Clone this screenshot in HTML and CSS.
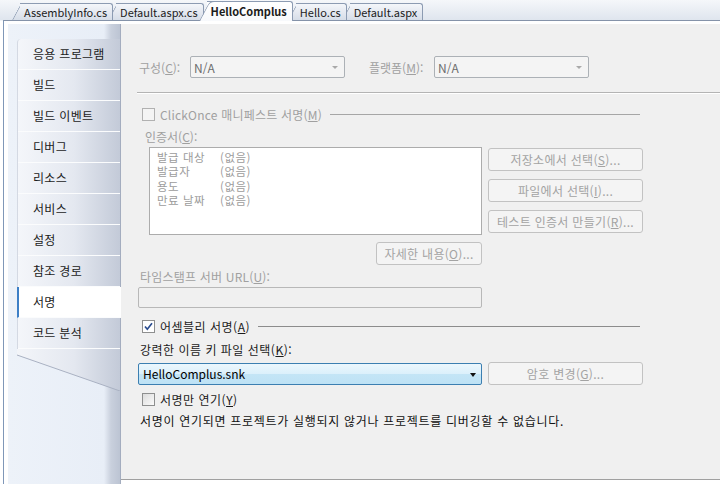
FILE: index.html
```html
<!DOCTYPE html>
<html lang="ko">
<head>
    <meta charset="UTF-8">
    <title>HelloComplus - 서명</title>
    <link rel="stylesheet" href="styles.css">
</head>
<body>
    <div class="tabs">
        <div class="tab">AssemblyInfo.cs</div>
        <div class="tab">Default.aspx.cs</div>
        <div class="tab active">HelloComplus</div>
        <div class="tab">Hello.cs</div>
        <div class="tab">Default.aspx</div>
    </div>

    <div class="doc">
        <div class="nav">
            <div class="nav-list">
                <div class="nav-item">응용 프로그램</div>
                <div class="nav-item">빌드</div>
                <div class="nav-item">빌드 이벤트</div>
                <div class="nav-item">디버그</div>
                <div class="nav-item">리소스</div>
                <div class="nav-item">서비스</div>
                <div class="nav-item">설정</div>
                <div class="nav-item">참조 경로</div>
                <div class="nav-item selected">서명</div>
                <div class="nav-item">코드 분석</div>
            </div>
            <svg class="nav-tail" width="103" height="42" viewBox="0 0 103 42">
                <defs>
                    <linearGradient id="tailFill" x1="0" y1="0" x2="1" y2="0">
                        <stop offset="0" stop-color="#f3f5f9"/>
                        <stop offset="0.55" stop-color="#e4e8f0"/>
                        <stop offset="1" stop-color="#c3cad8"/>
                    </linearGradient>
                </defs>
                <polygon points="0,0 103,0 103,42 0,6" fill="url(#tailFill)"/>
                <line x1="0" y1="6" x2="103" y2="42" stroke="#a9b1c2" stroke-width="1"/>
            </svg>
        </div>

        <div class="content">
            <div class="row config-row">
                <span class="label disabled w-config">구성(<u>C</u>):</span>
                <div class="select disabled"><span>N/A</span><i class="arrow gray"></i></div>
                <span class="label disabled w-platform">플랫폼(<u>M</u>):</span>
                <div class="select disabled"><span>N/A</span><i class="arrow gray"></i></div>
            </div>

            <div class="separator"></div>

            <div class="check-row clickonce">
                <span class="checkbox disabled"></span>
                <span class="label disabled">ClickOnce 매니페스트 서명(<u>M</u>)</span>
                <span class="rule"></span>
            </div>

            <div class="label disabled cert-label">인증서(<u>C</u>):</div>

            <div class="cert">
                <div class="cert-left">
                    <div class="listbox">
                        <div class="cert-line"><span class="key">발급 대상</span><span>(없음)</span></div>
                        <div class="cert-line"><span class="key">발급자</span><span>(없음)</span></div>
                        <div class="cert-line"><span class="key">용도</span><span>(없음)</span></div>
                        <div class="cert-line"><span class="key">만료 날짜</span><span>(없음)</span></div>
                    </div>
                    <div class="button disabled details">자세한 내용(<u>O</u>)...</div>
                </div>
                <div class="cert-buttons">
                    <div class="button disabled">저장소에서 선택(<u>S</u>)...</div>
                    <div class="button disabled">파일에서 선택(<u>I</u>)...</div>
                    <div class="button disabled">테스트 인증서 만들기(<u>R</u>)...</div>
                </div>
            </div>

            <div class="label disabled ts-label">타임스탬프 서버 URL(<u>U</u>):</div>
            <div class="textbox disabled"></div>

            <div class="check-row assembly">
                <span class="checkbox checked">
                    <svg width="11" height="11" viewBox="0 0 11 11"><path d="M2 5.5 L4.3 8.2 L9 2.3" fill="none" stroke="#2a4c8f" stroke-width="1.7"/></svg>
                </span>
                <span class="label">어셈블리 서명(<u>A</u>)</span>
                <span class="rule"></span>
            </div>

            <div class="label key-label">강력한 이름 키 파일 선택(<u>K</u>):</div>
            <div class="key-row">
                <div class="select combo"><span>HelloComplus.snk</span><i class="arrow"></i></div>
                <div class="button disabled password">암호 변경(<u>G</u>)...</div>
            </div>

            <div class="check-row delay">
                <span class="checkbox"></span>
                <span class="label">서명만 연기(<u>Y</u>)</span>
            </div>

            <div class="label note">서명이 연기되면 프로젝트가 실행되지 않거나 프로젝트를 디버깅할 수 없습니다.</div>
        </div>
    </div>
</body>
</html>
```

FILE: styles.css
```css
body {
    margin: 0;
    width: 720px;
    height: 484px;
    overflow: hidden;
    font-family: "Noto Sans CJK KR", "Noto Sans", sans-serif;
    font-size: 12px;
    color: #1b1b1b;
    background: linear-gradient(#f5f7fa, #dfe5ee 20px, #ffffff 21px);
}

u {
    text-decoration: underline;
    text-underline-offset: 1px;
}

/* 문서 탭 */
.tabs {
    position: relative;
    z-index: 0;
    display: flex;
    align-items: flex-end;
    height: 20px;
    padding-left: 20px;
}

.tab {
    position: relative;
    height: 16px;
    line-height: 16px;
    padding: 0 5px 0 4px;
    margin-right: 3px;
    border: 1px solid #8c9bb2;
    border-left: none;
    border-bottom: none;
    border-radius: 0 3px 0 0;
    background: linear-gradient(#f4f6fa, #d6dde8);
    font-size: 11px;
    white-space: nowrap;
}

    .tab::before {
        content: "";
        position: absolute;
        top: -1px;
        bottom: 0;
        left: -8px;
        width: 13px;
        border-left: 1px solid #8c9bb2;
        border-top: 1px solid #8c9bb2;
        border-radius: 5px 0 0 0;
        background: linear-gradient(#f4f6fa, #d6dde8);
        transform: skewX(-28deg);
        transform-origin: bottom left;
        z-index: -1;
    }

    .tab.active {
        z-index: 1;
        height: 19px;
        line-height: 19px;
        margin-bottom: -1px;
        font-weight: bold;
        background: linear-gradient(#ffffff, #f7f9fc);
    }

        .tab.active::before {
            background: linear-gradient(#ffffff, #f7f9fc);
        }

/* 속성 페이지 */
.doc {
    display: flex;
    height: 460px;
    margin-left: 3px;
    padding: 3px 0 0 4px;
    border-top: 1px solid #8593a9;
    border-left: 1px solid #7f97b8;
    background: #ffffff;
}

.nav {
    width: 103px;
    padding: 15px 0 0 9px;
    border-right: 1px solid #a4adbf;
    background: linear-gradient(to right, #edf2f9 0, #e8eef7 96px, #c9d0dd 103px, #bcc4d3 112px);
}

.nav-list {
    border-left: 1px solid #d4d9e3;
    border-radius: 4px 0 0 0;
    background: linear-gradient(to right, #f4f6fa, #e4e8f0 55%, #c3cad8);
}

.nav-item {
    height: 30px;
    line-height: 30px;
    padding-left: 15px;
    border-bottom: 1px solid #fbfcfd;
    letter-spacing: 0.3px;
}

    .nav-item.selected {
        position: relative;
        margin-right: -1px;
        margin-left: -1px;
        background: #ffffff;
        border-left: 2px solid #3d7fc6;
        padding-left: 14px;
    }

.nav-tail {
    display: block;
}

.content {
    flex: 1;
    height: 456px;
    padding: 32px 0 0 17px;
    box-sizing: border-box;
    background: #f0f0f0;
    border-bottom: 1px solid #a0a0a0;
    letter-spacing: 0.5px;
}

.label {
    line-height: 15px;
    white-space: nowrap;
}

    .label.disabled {
        color: #a0a0a0;
    }

.row {
    display: flex;
    align-items: center;
}

.w-config {
    width: 52px;
    padding-left: 1px;
    box-sizing: border-box;
    letter-spacing: 0;
}

.w-platform {
    width: 65px;
    margin-left: 24px;
    letter-spacing: 0;
}

.select {
    position: relative;
    display: flex;
    align-items: center;
    width: 155px;
    height: 22px;
    box-sizing: border-box;
    padding-left: 3px;
    border: 1px solid #acb1b6;
    border-radius: 2px;
    background: #f4f4f4;
    color: #6d6d6d;
    letter-spacing: 0;
}

.arrow {
    position: absolute;
    right: 6px;
    top: 9px;
    width: 0;
    height: 0;
    border-left: 3.5px solid transparent;
    border-right: 3.5px solid transparent;
    border-top: 4px solid #111;
}

    .arrow.gray {
        border-top-color: #a9a9a9;
        border-left-width: 3px;
        border-right-width: 3px;
        border-top-width: 3px;
    }

.separator {
    margin: 14px 0 0 -1px;
    border-top: 1px solid #b4b4b4;
    border-bottom: 1px solid #ffffff;
}

.check-row {
    display: flex;
    align-items: center;
    height: 16px;
    margin-right: 80px;
    padding-left: 4px;
}

.checkbox {
    display: flex;
    align-items: center;
    justify-content: center;
    width: 13px;
    height: 13px;
    box-sizing: border-box;
    margin-right: 5px;
    border: 1px solid #8e8f8f;
    background: linear-gradient(135deg, #dcdcdc, #fbfbfb);
}

    .checkbox.disabled {
        border-color: #b1b1b1;
        background: #f4f4f4;
    }

    .checkbox.checked {
        background: #ffffff;
    }

.rule {
    flex: 1;
    height: 1px;
    margin-left: 8px;
    background: #8c8c8c;
}

.clickonce {
    margin-top: 12px;
}

    .clickonce .label {
        letter-spacing: 0.2px;
    }

    .clickonce .rule {
        background: #a6a6a6;
    }

.cert-label {
    margin: 7px 0 0 7px;
    letter-spacing: 0;
}

.cert {
    display: flex;
    gap: 6px;
    margin-top: 3px;
    padding-left: 11px;
}

.cert-left {
    display: flex;
    flex-direction: column;
    width: 333px;
}

.listbox {
    height: 88px;
    box-sizing: border-box;
    padding: 2px 0 0 7px;
    border: 1px solid #acacac;
    background: #ffffff;
    color: #9c9c9c;
    font-size: 11.5px;
}

.cert-line {
    display: flex;
    height: 14.3px;
    line-height: 14px;
}

    .cert-line .key {
        width: 63px;
    }

.cert-buttons {
    display: flex;
    flex-direction: column;
    gap: 8px;
    padding-top: 1px;
}

.button {
    display: flex;
    align-items: center;
    justify-content: center;
    width: 155px;
    height: 23px;
    box-sizing: border-box;
    border: 1px solid #c2c2c2;
    border-radius: 3px;
    background: #f4f4f4;
    white-space: nowrap;
    letter-spacing: 0.3px;
}

    .button.disabled {
        color: #a3a3a3;
    }

    .button.details {
        align-self: flex-end;
        width: 106px;
        margin-top: 7px;
    }

.ts-label {
    margin: 4px 0 0 2px;
    letter-spacing: 0.2px;
}

.textbox {
    width: 344px;
    height: 21px;
    box-sizing: border-box;
    margin-top: 3px;
    border: 1px solid #b8b8b8;
    border-radius: 2px;
    background: #f0f0f0;
}

.assembly {
    margin-top: 10px;
}

.key-label {
    margin: 8px 0 0 2px;
}

.key-row {
    display: flex;
    align-items: center;
    gap: 6px;
    margin-top: 5px;
}

.select.combo {
    width: 344px;
    height: 22px;
    padding-left: 4px;
    border-color: #3c7fb1;
    background: linear-gradient(#ecf7fd, #dbf0fb 50%, #c4e5f6 51%, #bee2f5);
    color: #000000;
}

    .select.combo .arrow {
        right: 5px;
    }

.button.password {
    height: 23px;
}

.delay {
    margin-top: 6px;
}

.note {
    margin: 6px 0 0 2px;
    color: #111111;
    letter-spacing: 0.7px;
}
```
